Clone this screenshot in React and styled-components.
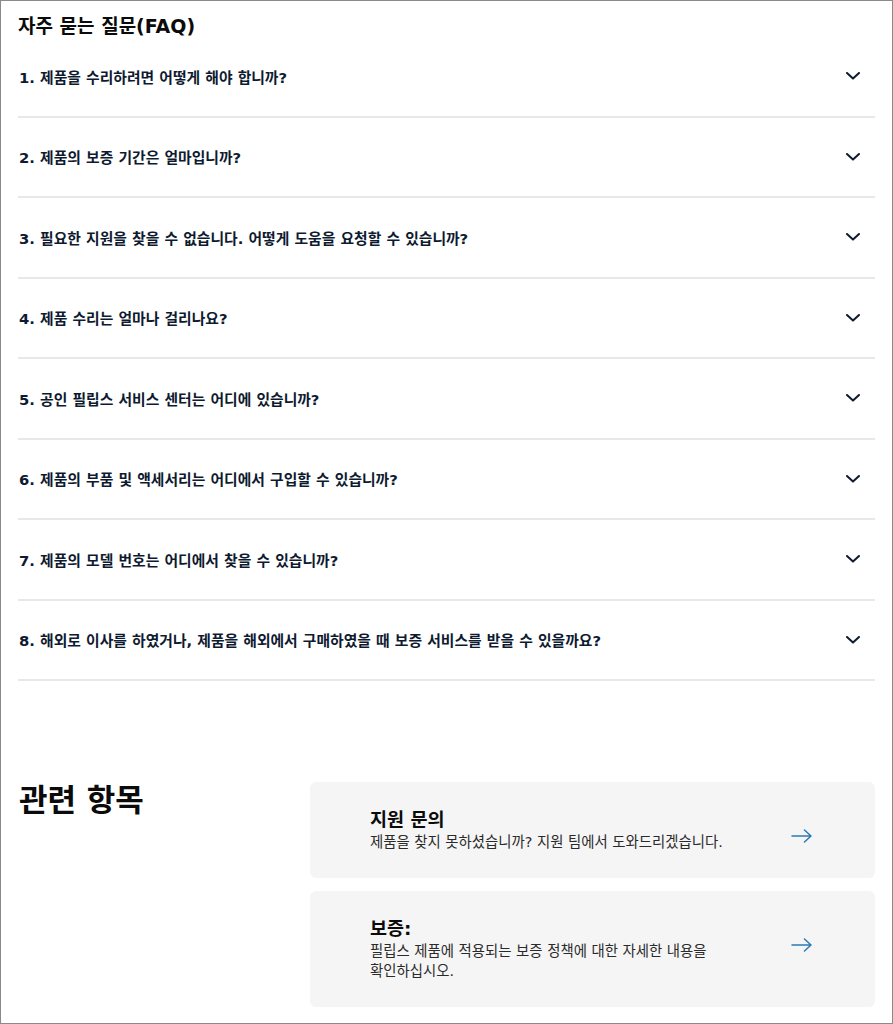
import React from "react";
import styled, { createGlobalStyle } from "styled-components";

const GlobalStyle = createGlobalStyle`
  html, body {
    margin: 0;
    padding: 0;
    background: #ffffff;
  }
  body {
    font-family: "DejaVu Sans", "Noto Sans CJK KR", sans-serif;
    color: #111111;
  }
  * { box-sizing: border-box; }
`;

const questions = [
  "1. 제품을 수리하려면 어떻게 해야 합니까?",
  "2. 제품의 보증 기간은 얼마입니까?",
  "3. 필요한 지원을 찾을 수 없습니다. 어떻게 도움을 요청할 수 있습니까?",
  "4. 제품 수리는 얼마나 걸리나요?",
  "5. 공인 필립스 서비스 센터는 어디에 있습니까?",
  "6. 제품의 부품 및 액세서리는 어디에서 구입할 수 있습니까?",
  "7. 제품의 모델 번호는 어디에서 찾을 수 있습니까?",
  "8. 해외로 이사를 하였거나, 제품을 해외에서 구매하였을 때 보증 서비스를 받을 수 있을까요?",
];

const related = [
  {
    title: "지원 문의",
    text: "제품을 찾지 못하셨습니까? 지원 팀에서 도와드리겠습니다.",
  },
  {
    title: "보증:",
    text: "필립스 제품에 적용되는 보증 정책에 대한 자세한 내용을 확인하십시오.",
  },
];

const Chevron = () => (
  <svg width="14" height="8" viewBox="0 0 14 8" fill="none">
    <path d="M1 1l6 5.6L13 1" stroke="#0e1a30" strokeWidth="2" strokeLinecap="round" strokeLinejoin="round" />
  </svg>
);

const Arrow = () => (
  <svg width="22" height="14" viewBox="0 0 22 14" fill="none">
    <path d="M1 7h19M13.5 1l6.5 6-6.5 6" stroke="#2b7bb5" strokeWidth="1.5" strokeLinecap="round" strokeLinejoin="round" />
  </svg>
);

const App = () => {
  return (
    <Page>
      <GlobalStyle />
      <FaqTitle>자주 묻는 질문(FAQ)</FaqTitle>
      <FaqList>
        {questions.map((q) => (
          <FaqRow key={q}>
            <Question>{q}</Question>
            <Chevron />
          </FaqRow>
        ))}
      </FaqList>

      <Related>
        <RelatedTitle>관련 항목</RelatedTitle>
        <Cards>
          {related.map((item) => (
            <Card key={item.title}>
              <CardText>
                <CardTitle>{item.title}</CardTitle>
                <CardDesc>{item.text}</CardDesc>
              </CardText>
              <ArrowWrap>
                <Arrow />
              </ArrowWrap>
            </Card>
          ))}
        </Cards>
      </Related>
    </Page>
  );
};

const Page = styled.div`
  width: 893px;
  height: 1024px;
  border: 1px solid #8a8a8a;
  padding: 14px 17px 0 17px;
  overflow: hidden;
`;

const FaqTitle = styled.h2`
  margin: 0;
  font-size: 19px;
  line-height: 22px;
  font-weight: 700;
  color: #0b0b0b;
`;

const FaqList = styled.div`
  display: flex;
  flex-direction: column;
`;

const FaqRow = styled.div`
  display: flex;
  align-items: center;
  justify-content: space-between;
  height: 80.5px;
  padding: 0 15px 0 1px;
  border-bottom: 2px solid #e8e8e8;
`;

const Question = styled.span`
  font-size: 14.8px;
  font-weight: 700;
  color: #0e1a30;
`;

const Related = styled.div`
  display: flex;
  align-items: flex-start;
  margin-top: 101px;
`;

const RelatedTitle = styled.h2`
  flex: 0 0 292px;
  margin: 0;
  padding-left: 1px;
  font-size: 31px;
  line-height: 36px;
  font-weight: 700;
  color: #0b0b0b;
`;

const Cards = styled.div`
  flex: 1;
  display: flex;
  flex-direction: column;
  gap: 13px;
`;

const Card = styled.div`
  display: flex;
  align-items: center;
  background: #f5f5f5;
  border-radius: 6px;
  padding: 26px 62px 26px 60px;
`;

const CardText = styled.div`
  flex: 0 1 362px;
  display: flex;
  flex-direction: column;
`;

const CardTitle = styled.div`
  font-size: 18.5px;
  line-height: 24px;
  font-weight: 700;
  color: #0b0b0b;
`;

const CardDesc = styled.div`
  font-size: 14.4px;
  line-height: 20px;
  color: #2a2a2a;
  word-break: keep-all;
`;

const ArrowWrap = styled.div`
  margin-left: auto;
  align-self: flex-start;
  margin-top: 21px;
  display: flex;
`;

export default App;
